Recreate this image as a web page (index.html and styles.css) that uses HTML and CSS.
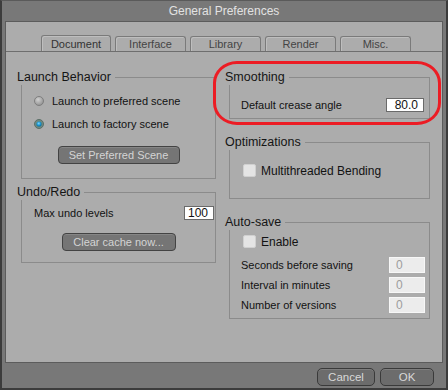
FILE: index.html
```html
<!DOCTYPE html>
<html>
<head>
<meta charset="utf-8">
<link rel="stylesheet" href="styles.css">
</head>
<body>
<div class="dialog">
  <div class="titlebar">General Preferences</div>
  <div class="panel">
    <div class="tabs">
      <div class="tab active">Document</div>
      <div class="tab">Interface</div>
      <div class="tab">Library</div>
      <div class="tab">Render</div>
      <div class="tab">Misc.</div>
    </div>
    <div class="pane">
      <div class="col">
        <section class="group">
          <div class="ghead"><span class="gtitle">Launch Behavior</span><span class="gline"></span></div>
          <div class="gbody launch">
            <label class="radio-row">
              <svg class="radio" width="10" height="10" viewBox="0 0 10 10"><defs><radialGradient id="rg1" cx="40%" cy="35%" r="70%"><stop offset="0" stop-color="#d0d0d0"/><stop offset="1" stop-color="#8e8e8e"/></radialGradient></defs><circle cx="5" cy="5" r="4.5" fill="url(#rg1)" stroke="#7e7e7e" stroke-width="1"/></svg>
              <span>Launch to preferred scene</span>
            </label>
            <label class="radio-row">
              <svg class="radio" width="10" height="10" viewBox="0 0 10 10"><defs><radialGradient id="rg2" cx="45%" cy="40%" r="60%"><stop offset="0" stop-color="#7fd6ff"/><stop offset="0.6" stop-color="#1a96d0"/><stop offset="1" stop-color="#0f6e9e"/></radialGradient></defs><circle cx="5" cy="5" r="4.5" fill="#6f8a80" stroke="#5b6f68" stroke-width="1"/><circle cx="5" cy="5" r="2.6" fill="url(#rg2)"/></svg>
              <span>Launch to factory scene</span>
            </label>
            <button class="btn btn-pref">Set Preferred Scene</button>
          </div>
        </section>
        <section class="group undo">
          <div class="ghead"><span class="gtitle">Undo/Redo</span><span class="gline"></span></div>
          <div class="gbody undo-body">
            <div class="field-row undo-row">
              <span>Max undo levels</span>
              <input class="num num-undo" value="100" readonly>
            </div>
            <button class="btn btn-clear">Clear cache now...</button>
          </div>
        </section>
      </div>
      <div class="col">
        <section class="group">
          <div class="ghead"><span class="gtitle">Smoothing</span><span class="gline"></span></div>
          <div class="gbody smooth-body">
            <div class="field-row smooth-row">
              <span>Default crease angle</span>
              <input class="num num-crease" value="80.0" readonly>
            </div>
          </div>
        </section>
        <section class="group spaced">
          <div class="ghead"><span class="gtitle">Optimizations</span><span class="gline"></span></div>
          <div class="gbody opt-body">
            <label class="check-row"><span class="check"></span><span>Multithreaded Bending</span></label>
          </div>
        </section>
        <section class="group spaced">
          <div class="ghead"><span class="gtitle">Auto-save</span><span class="gline"></span></div>
          <div class="gbody auto-body">
            <label class="check-row"><span class="check"></span><span>Enable</span></label>
            <div class="auto-rows">
              <div class="field-row auto-row"><span>Seconds before saving</span><input class="num dis" value="0" readonly></div>
              <div class="field-row auto-row"><span>Interval in minutes</span><input class="num dis" value="0" readonly></div>
              <div class="field-row auto-row"><span>Number of versions</span><input class="num dis" value="0" readonly></div>
            </div>
          </div>
        </section>
      </div>
    </div>
  </div>
  <div class="footer">
    <button class="btn btn-foot btn-cancel">Cancel</button>
    <button class="btn btn-foot btn-ok">OK</button>
  </div>
  <div class="highlight"></div>
</div>
</body>
</html>
```
FILE: styles.css
```css
* { box-sizing: border-box; }
html, body { margin: 0; padding: 0; background: #3a3a3a; }
body { font-family: "Liberation Sans", Arial, sans-serif; }

.dialog {
  position: relative;
  width: 448px;
  height: 390px;
  background: #787878;
  border: 2px solid #3c3c3c;
  border-top: 1px solid #5a5a5a;
  display: flex;
  flex-direction: column;
}

.titlebar {
  height: 20px;
  line-height: 21px;
  text-align: center;
  font-size: 12px;
  color: #e2e2e2;
}

.panel {
  margin: 0 3px;
  height: 342px;
  border: 1px solid #5c5c5c;
  background: #acacac;
}

.tabs {
  display: flex;
  align-items: flex-end;
  gap: 4px;
  padding: 13px 0 0 35px;
  border-bottom: 1px solid #6e6e6e;
}
.tab {
  width: 71px;
  height: 15px;
  border: 1px solid #7a7a7a;
  border-bottom: 0;
  border-radius: 3px 3px 0 0;
  box-shadow: inset 1px 1px 0 #bebebe;
  font-size: 11px;
  line-height: 15px;
  text-align: center;
  color: #444;
}
.tab.active {
  width: 70px;
  height: 16px;
  line-height: 16px;
  color: #333;
}

.pane {
  display: grid;
  grid-template-columns: 199px 205px;
  column-gap: 9px;
  padding: 17px 0 0 11px;
  align-items: start;
}

.ghead {
  display: flex;
  height: 16px;
  line-height: 16px;
  font-size: 12.5px;
  color: #151515;
}
.gline {
  flex: 1;
  align-self: flex-end;
  height: 8px;
  margin-left: 4px;
  border-top: 1px solid #8b8b8b;
  border-right: 1px solid #8b8b8b;
}
.gbody {
  margin-left: 4px;
  border: 1px solid #8b8b8b;
  border-top: 0;
  display: flex;
  flex-direction: column;
  font-size: 11px;
  color: #121212;
}

.launch { padding: 4px 0 14px 0; }
.radio-row {
  display: flex;
  align-items: center;
  height: 23px;
  padding-left: 12px;
  gap: 8px;
}
.radio { display: block; }

.btn {
  display: block;
  height: 18px;
  padding: 0;
  border: 1px solid #434343;
  border-radius: 4px;
  background: #757575;
  box-shadow: inset 0 1px 0 #868686;
  color: #d4d4d4;
  font-family: "Liberation Sans", Arial, sans-serif;
  font-size: 11px;
  line-height: 16px;
}
.btn-pref { width: 122px; margin: 11px auto 0; }

.undo { margin-top: 5px; }
.undo-body { padding: 6px 0 11px 0; }
.field-row {
  display: flex;
  align-items: center;
  justify-content: space-between;
}
.undo-row { height: 14px; padding: 0 1px 0 12px; }
.btn-clear { width: 114px; margin: 13px auto 0; }

.num {
  display: block;
  height: 14px;
  padding: 0 5px 0 0;
  margin: 0;
  border: 1px solid #6a6a6a;
  background: #fff;
  color: #111;
  font-family: "Liberation Sans", Arial, sans-serif;
  font-size: 12px;
  text-align: right;
  outline: none;
}
.num-undo { width: 30px; }
.num-crease { width: 38px; }

.smooth-body { padding: 13px 0 6px 0; }
.smooth-row { height: 14px; padding: 0 5px 0 11px; }

.spaced { margin-top: 15px; }
.check-row {
  display: flex;
  align-items: center;
  gap: 5px;
  height: 13px;
  padding-left: 13px;
  font-size: 12px;
}
.check {
  width: 13px;
  height: 13px;
  border-radius: 2px;
  background: #e4e4e4;
  border: 1px solid #d0d0d0;
}
.opt-body { padding: 14px 0 21px 0; }

.auto-body { padding: 5px 0 5px 0; }
.auto-rows {
  display: flex;
  flex-direction: column;
  gap: 4px;
  margin-top: 9px;
}
.auto-row { height: 16px; padding: 0 4px 0 11px; }
.num.dis {
  width: 36px;
  height: 16px;
  padding: 0 0 0 6px;
  text-align: left;
  background: #ececec;
  border: 1px solid #f7f7f7;
  color: #9c9c9c;
}

.footer {
  flex: 1;
  display: flex;
  justify-content: flex-end;
  align-items: flex-start;
  gap: 5px;
  padding: 5px 12px 0 0;
}
.btn-foot {
  height: 18px;
  border: 1px solid #3a3a3a;
  border-radius: 5px;
  background: #6c6c6c;
  box-shadow: inset 0 1px 0 #7e7e7e;
  color: #d8d8d8;
  font-size: 11.5px;
}
.btn-cancel { width: 58px; }
.btn-ok { width: 54px; }

.highlight {
  position: absolute;
  left: 211px;
  top: 60px;
  width: 228px;
  height: 64px;
  border: 3px solid #ec1c24;
  border-radius: 24px / 22px;
  pointer-events: none;
}
```
